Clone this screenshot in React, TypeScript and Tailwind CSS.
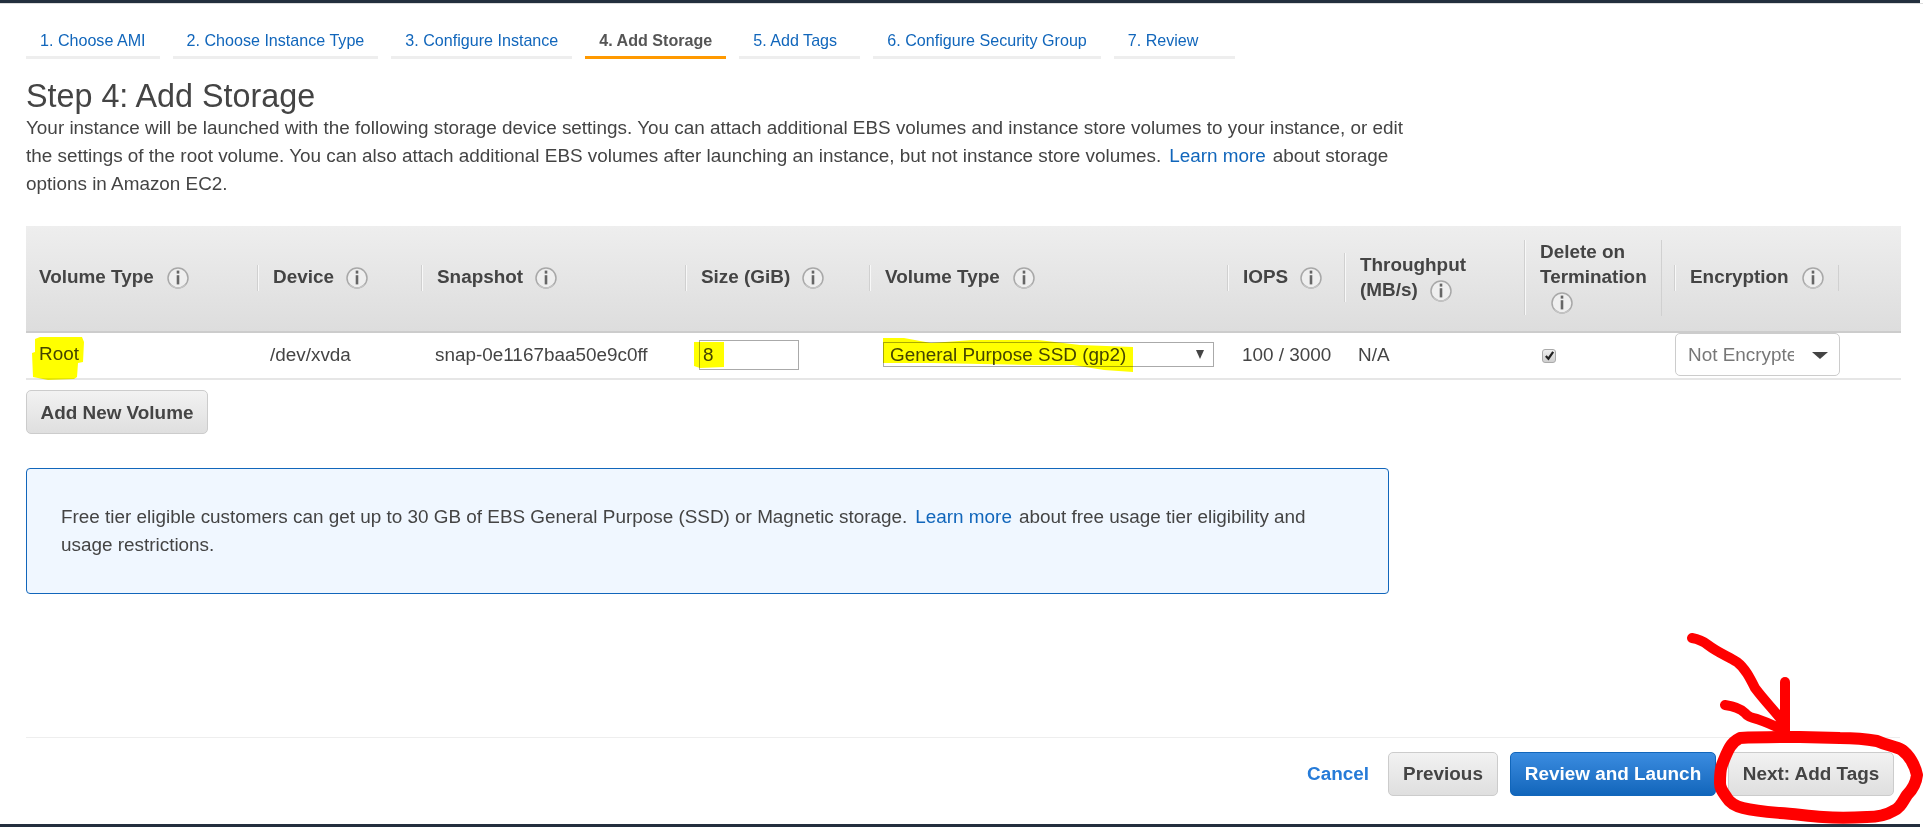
const tabs = [
  { label: "1. Choose AMI" },
  { label: "2. Choose Instance Type" },
  { label: "3. Configure Instance" },
  { label: "4. Add Storage", active: true },
  { label: "5. Add Tags" },
  { label: "6. Configure Security Group" },
  { label: "7. Review" },
];

function InfoIcon({ className = "" }: { className?: string }) {
  return (
    <svg viewBox="0 0 22 22" className={`inline-block w-[22px] h-[22px] align-middle ${className}`}>
      <circle cx="11" cy="11" r="10" fill="#efefef" stroke="#a8a8a8" strokeWidth="1.5" />
      <path d="M3.5 17.5a10 10 0 0 0 15 0" fill="none" stroke="#c4c4c4" strokeWidth="1.5" />
      <rect x="9.7" y="3.6" width="2.6" height="3" fill="#666" />
      <rect x="9.7" y="8.2" width="2.6" height="9.2" fill="#666" />
    </svg>
  );
}

function HeaderCell({ children, className = "" }: { children: React.ReactNode; className?: string }) {
  return (
    <div className={`flex items-center ${className}`}>
      <div className="border-l border-[#f8f8f8] shadow-[-1px_0_0_#d0d0d0] pl-[14px] min-h-[26px] flex items-center">
        <div className="leading-[24.7px] whitespace-nowrap">{children}</div>
      </div>
    </div>
  );
}

const gridCols =
  "grid grid-cols-[232px_164px_264px_184px_358px_117px_180px_136px_178px_62px]";

function Button({ children, primary, className = "" }: { children: React.ReactNode; primary?: boolean; className?: string }) {
  return (
    <button
      className={`h-[44px] rounded-[5px] border font-bold whitespace-nowrap ${className} ${
        primary
          ? "border-[#1166bb] bg-gradient-to-b from-[#3a8ce0] to-[#1166bb] text-white"
          : "border-[#cccccc] bg-gradient-to-b from-[#f2f2f2] to-[#dfdfdf] text-[#444444]"
      }`}
    >
      {children}
    </button>
  );
}

export default function App() {
  return (
    <div className="relative flex flex-col h-[827px] w-full overflow-hidden bg-white text-[#444444] text-[18.9px] font-['Liberation_Sans',Arial,sans-serif]">
      <div className="h-[3px] w-[1920px] bg-[#232f3e] shrink-0" />
      <div className="h-px bg-[#dddddd] shrink-0" />

      <nav className="flex gap-[13px] mt-[25px] ml-[26px] text-[16.1px]">
        {tabs.map((t) => (
          <div
            key={t.label}
            className={`h-[30px] min-w-[121px] px-[14px] leading-[20px] pt-[1px] border-b-[3px] whitespace-nowrap ${
              t.active ? "border-[#ff9900] font-bold text-[#555555]" : "border-[#eeeeee] text-[#1166bb]"
            }`}
          >
            {t.label}
          </div>
        ))}
      </nav>

      <div className="mx-[26px]">
        <h1 className="mt-[19px] h-[36px] text-[32.3px] leading-[36px] font-normal">Step 4: Add Storage</h1>
        <p className="leading-[28px] whitespace-nowrap">
          Your instance will be launched with the following storage device settings. You can attach additional EBS volumes and instance store volumes to your instance, or edit
          <br />
          the settings of the root volume. You can also attach additional EBS volumes after launching an instance, but not instance store volumes.
          <a className="text-[#1166bb] ml-[8px] mr-[7px]">Learn more</a>
          about storage
          <br />
          options in Amazon EC2.
        </p>

        <div className="mt-[28px] w-[1875px]">
          <div className={`${gridCols} h-[107px] pb-[2px] bg-gradient-to-b from-[#eeeeee] to-[#dddddd] border-b-2 border-[#cccccc] font-bold`}>
            <div className="flex items-center pl-[13px]">
              <span>Volume Type</span>
              <InfoIcon className="ml-[13px]" />
            </div>
            <HeaderCell>
              Device
              <InfoIcon className="ml-[12px]" />
            </HeaderCell>
            <HeaderCell>
              Snapshot
              <InfoIcon className="ml-[12px]" />
            </HeaderCell>
            <HeaderCell>
              Size (GiB)
              <InfoIcon className="ml-[12px]" />
            </HeaderCell>
            <HeaderCell>
              Volume Type
              <InfoIcon className="ml-[13px]" />
            </HeaderCell>
            <HeaderCell>
              IOPS
              <InfoIcon className="ml-[12px]" />
            </HeaderCell>
            <HeaderCell>
              Throughput
              <br />
              (MB/s)
              <InfoIcon className="ml-[12px]" />
            </HeaderCell>
            <HeaderCell>
              Delete on
              <br />
              Termination
              <br />
              <InfoIcon className="ml-[11px]" />
            </HeaderCell>
            <div className="flex items-center border-l-0">
              <div className="self-center h-[76px] border-l border-[#d0d0d0]" />
              <div className="ml-[13px] border-l border-[#f8f8f8] shadow-[-1px_0_0_#d0d0d0] pl-[14px] h-[26px] flex items-center whitespace-nowrap">
                Encryption
                <InfoIcon className="ml-[13px]" />
              </div>
            </div>
            <div className="flex items-center -ml-[1px]">
              <div className="h-[26px] border-l border-[#d0d0d0]" />
            </div>
          </div>

          <div className={`${gridCols} h-[47px] items-center border-b-2 border-[#e6e6e6]`}>
            <div className="pl-[13px] -mt-[2px]">Root</div>
            <div className="pl-[12px]">/dev/xvda</div>
            <div className="pl-[13px]">snap-0e1167baa50e9c0ff</div>
            <div className="pl-[13px] -mt-[2px]">
              <input
                readOnly
                value="8"
                className="w-[100px] h-[30px] pl-[3px] border border-[#aaaaaa] bg-white outline-none"
              />
            </div>
            <div className="pl-[13px] -mt-[2px]">
              <div className="relative w-[331px] h-[25px] pl-[6px] leading-[23px] border border-[#aaaaaa] bg-white">
                General Purpose SSD (gp2)
                <span className="absolute right-[9px] top-[7px] w-0 h-0 border-x-[4px] border-x-transparent border-t-[9px] border-t-[#444444]" />
              </div>
            </div>
            <div className="pl-[14px]">100 / 3000</div>
            <div className="pl-[13px]">N/A</div>
            <div className="pl-[17px]">
              <div className="w-[14px] h-[14px] rounded-[3px] border border-[#aaaaaa] bg-gradient-to-b from-[#eeeeee] to-[#cfcfcf] flex items-center justify-center">
                <svg viewBox="0 0 12 12" className="w-[11px] h-[11px]">
                  <path d="M2 6.5l2.8 3L10 2" fill="none" stroke="#222" strokeWidth="2.4" />
                </svg>
              </div>
            </div>
            <div className="pl-[14px]">
              <div className="relative w-[165px] h-[43px] -mt-[3px] pl-[12px] leading-[41px] rounded-[5px] border border-[#cccccc] text-[#777777]">
                <span className="block w-[106px] overflow-hidden whitespace-nowrap">Not Encrypted</span>
                <span className="absolute right-[11px] top-[18px] w-0 h-0 border-x-[8px] border-x-transparent border-t-[7px] border-t-[#444444]" />
              </div>
            </div>
            <div />
          </div>
        </div>

        <div className="mt-[10px]">
          <button className="h-[44px] w-[182px] pt-[2px] rounded-[5px] border border-[#cccccc] bg-gradient-to-b from-[#f2f2f2] to-[#dfdfdf] font-bold">
            Add New Volume
          </button>
        </div>

        <div className="mt-[34px] w-[1363px] h-[126px] pt-[34px] pl-[34px] rounded-[4px] border border-[#1166bb] bg-[#f0f7ff] leading-[28px] whitespace-nowrap">
          Free tier eligible customers can get up to 30 GB of EBS General Purpose (SSD) or Magnetic storage.
          <a className="text-[#1166bb] ml-[8px] mr-[7px]">Learn more</a>
          about free usage tier eligibility and
          <br />
          usage restrictions.
        </div>
      </div>

      <footer className="mt-auto ml-[26px] w-[1874px] border-t border-[#eeeeee] pt-[14px] pb-[31px] pr-[6px] flex items-center justify-end">
        <a className="font-bold text-[#267bd8] mr-[19px]">Cancel</a>
        <div className="mr-[12px]">
          <Button className="w-[110px]">Previous</Button>
        </div>
        <div className="mr-[12px]">
          <Button primary className="w-[206px]">Review and Launch</Button>
        </div>
        <Button className="w-[166px]">Next: Add Tags</Button>
      </footer>
      <div className="absolute bottom-0 left-0 h-[3px] w-[1920px] bg-[#232f3e]" />

      {/* marker scribbles on top of the screenshot */}
      <svg className="absolute inset-0 w-[1923px] h-[827px] mix-blend-multiply pointer-events-none" viewBox="0 0 1923 827">
        <g fill="#ffff00">
          <path d="M35 339L40 337H82L84 342L83 362L78 363L77 377L74 379L48 380L33 377L32 353L35 352Z" />
          <path d="M694 342H724V367L700 368L694 366Z" />
          <path d="M883 338L904 338L931 343L973 340L1038 340L1080 345L1133 347V372L1104 370L1073 365L1035 365L931 363L883 363Z" />
        </g>
      </svg>
      <svg className="absolute inset-0 w-[1923px] h-[827px] pointer-events-none" viewBox="0 0 1923 827">
        <g fill="none" stroke="#ff0000" strokeLinecap="round" strokeLinejoin="round">
          <g strokeWidth="10">
            <path d="M1692 638C1698 639 1703 641 1708 645C1717 652 1727 656 1737 662C1745 668 1750 678 1755 688C1764 700 1772 708 1780 718L1785 730" />
            <path d="M1785 682V732" />
            <path d="M1725 705C1732 706 1740 708 1745 713C1748 717 1752 718 1757 719C1766 722 1775 726 1783 730" />
          </g>
          <path
            strokeWidth="12"
            d="M1740 738C1760 737 1780 737 1800 737L1840 738C1855 738 1866 739 1877 741C1888 746 1895 746 1902 750C1909 755 1915 765 1917 775C1916 784 1912 790 1907 795C1902 803 1900 808 1893 811C1885 816 1875 817 1867 817C1850 818 1835 818 1823 817C1808 816 1795 814 1780 813C1768 812 1755 811 1743 808C1735 806 1730 803 1727 798C1723 792 1720 789 1720 783C1720 776 1720 770 1722 765C1725 757 1727 752 1730 747C1733 742 1736 740 1740 738Z"
          />
        </g>
      </svg>
    </div>
  );
}
